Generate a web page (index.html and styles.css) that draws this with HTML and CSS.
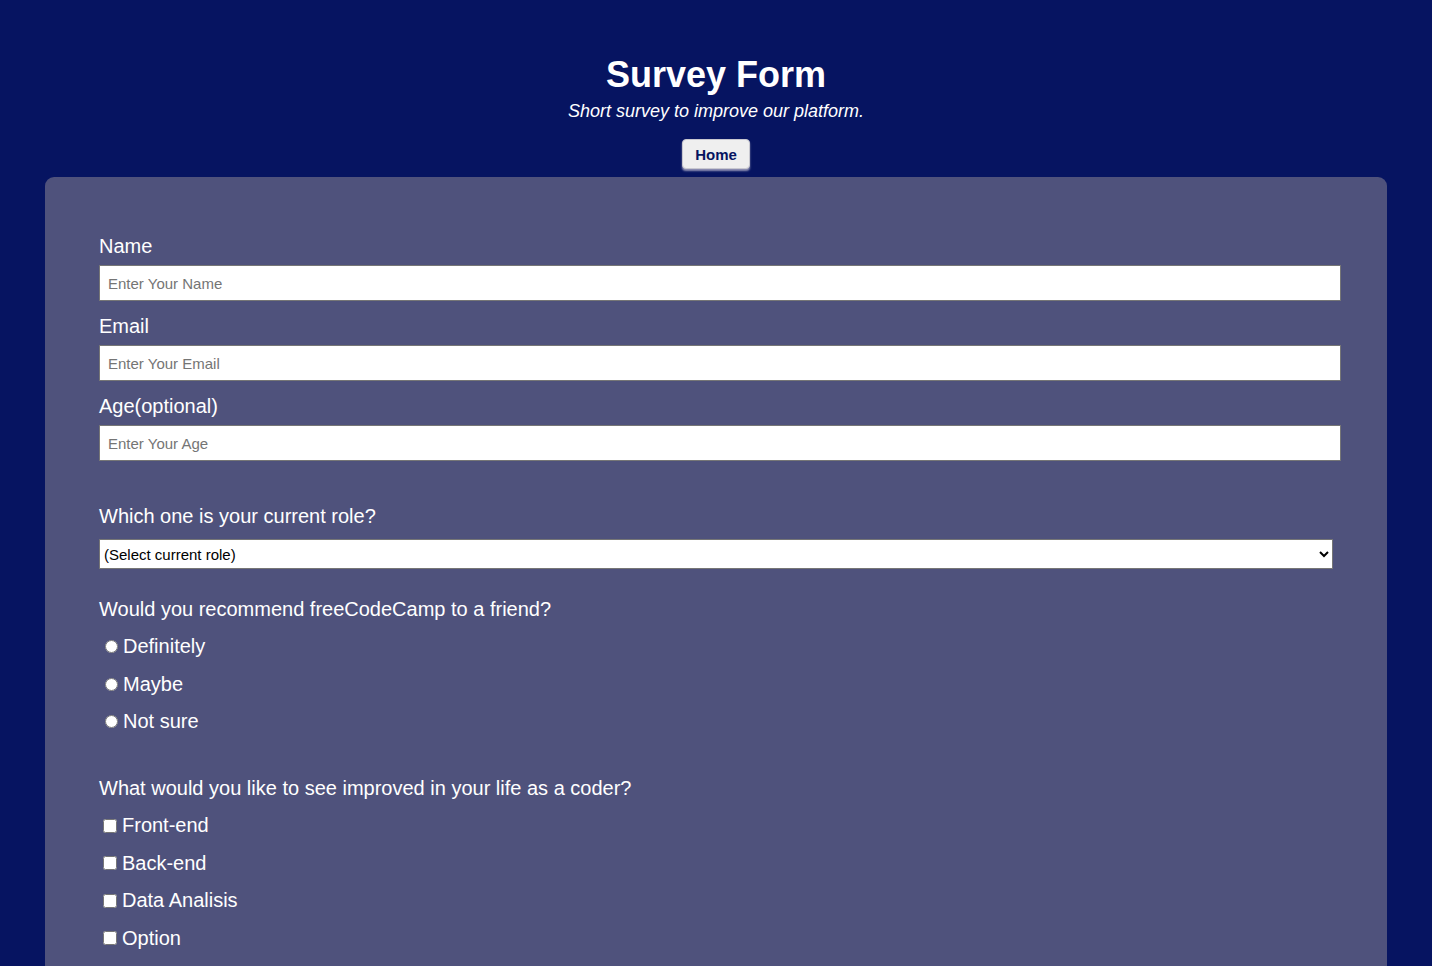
FILE: index.html
```html
<!DOCTYPE html>
<html lang="en">
<head>
<meta charset="utf-8">
<title>Survey Form</title>
<link rel="stylesheet" href="styles.css">
</head>
<body>
<header class="header">
  <h1 class="title">Survey Form</h1>
  <p class="subtitle">Short survey to improve our platform.</p>
  <button class="home-btn" type="button">Home</button>
</header>
<main class="card">
  <form class="form">
    <label class="field-label" for="name">Name</label>
    <input class="text-input" id="name" type="text" placeholder="Enter Your Name">
    <label class="field-label" for="email">Email</label>
    <input class="text-input" id="email" type="email" placeholder="Enter Your Email">
    <label class="field-label" for="age">Age(optional)</label>
    <input class="text-input" id="age" type="number" placeholder="Enter Your Age">

    <p class="question q-role">Which one is your current role?</p>
    <select class="select" id="role">
      <option>(Select current role)</option>
    </select>

    <p class="question q-rec">Would you recommend freeCodeCamp to a friend?</p>
    <label class="choice"><input class="radio" type="radio" name="rec">Definitely</label>
    <label class="choice"><input class="radio" type="radio" name="rec">Maybe</label>
    <label class="choice"><input class="radio" type="radio" name="rec">Not sure</label>

    <p class="question q-imp">What would you like to see improved in your life as a coder?</p>
    <label class="choice"><input class="check" type="checkbox">Front-end</label>
    <label class="choice"><input class="check" type="checkbox">Back-end</label>
    <label class="choice"><input class="check" type="checkbox">Data Analisis</label>
    <label class="choice"><input class="check" type="checkbox">Option</label>
  </form>
</main>
</body>
</html>
```
FILE: styles.css
```css
html, body {
  margin: 0;
  padding: 0;
}
body {
  background: #061461;
  font-family: "Liberation Sans", Arial, sans-serif;
  color: #ffffff;
}
.header {
  display: flex;
  flex-direction: column;
  align-items: center;
  padding-top: 53px;
}
.title {
  margin: 0;
  font-size: 36px;
  line-height: 43px;
  font-weight: bold;
}
.subtitle {
  margin: 5px 0 0;
  font-size: 18px;
  line-height: 21px;
  font-style: italic;
}
.home-btn {
  margin-top: 17px;
  width: 68px;
  height: 30px;
  padding: 0;
  font-family: "Liberation Sans", Arial, sans-serif;
  font-size: 15px;
  font-weight: bold;
  color: #061461;
  background: #efefef;
  border: 1px solid #c8c8d0;
  border-radius: 4px;
  box-shadow: 0 2px 2px rgba(160, 160, 190, 0.9);
}
.card {
  margin: 8px 45px 0;
  background: #4f527c;
  border-radius: 9px 9px 0 0;
  padding: 58px 54px 40px;
  min-height: 800px;
}
.form {
  display: flex;
  flex-direction: column;
  align-items: flex-start;
}
.field-label {
  font-size: 20px;
  line-height: 23px;
  margin-bottom: 7px;
}
.text-input {
  box-sizing: border-box;
  width: calc(100% + 8px);
  height: 36px;
  margin: 0 0 14px;
  padding: 0 8px;
  border: 1px solid #767676;
  background: #ffffff;
  font-family: "Liberation Sans", Arial, sans-serif;
  font-size: 15px;
  color: #000;
}
.text-input::placeholder {
  color: #757575;
}
.question {
  margin: 0;
  font-size: 20px;
  line-height: 23px;
}
.q-role {
  margin-top: 30px;
  margin-bottom: 11px;
}
.select {
  box-sizing: border-box;
  width: 100%;
  height: 30px;
  margin: 0;
  padding: 0;
  border: 1px solid #767676;
  border-radius: 0;
  background: #ffffff;
  font-family: "Liberation Sans", Arial, sans-serif;
  font-size: 15px;
  color: #000;
}
.q-rec {
  margin-top: 29px;
  margin-bottom: 7px;
}
.q-imp {
  margin-top: 36px;
  margin-bottom: 7px;
}
.choice {
  display: flex;
  align-items: center;
  height: 37.6px;
  font-size: 20px;
}
.radio {
  width: 13px;
  height: 13px;
  margin: 0 5px 0 6px;
}
.check {
  width: 14px;
  height: 14px;
  margin: 0 5px 0 4px;
}
```
